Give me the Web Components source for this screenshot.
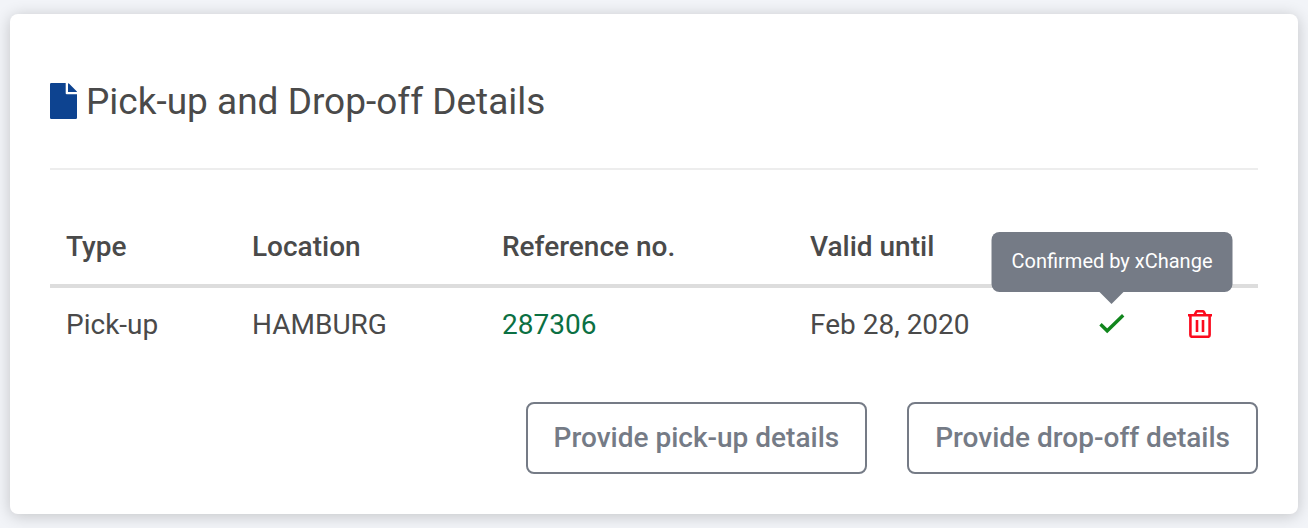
<!DOCTYPE html>
<html lang="en">
<head>
<meta charset="utf-8">
<meta name="viewport" content="width=device-width, initial-scale=1">
<title>Pick-up and Drop-off Details</title>
<style>
body { margin: 0; padding: 14px 10px; background: #f2f4f8; color: #4a4a4a; font-family: Roboto, "Liberation Sans", sans-serif; font-size: 28px; line-height: 42px; }
</style>
</head>
<body>
<x-panel>
  <x-icon slot="icon" name="file"></x-icon>
  <span slot="title">Pick-up and Drop-off Details</span>
  <x-details-table></x-details-table>
  <x-button slot="actions">Provide pick-up details</x-button>
  <x-button slot="actions">Provide drop-off details</x-button>
</x-panel>
<script>
class ShadowElement extends HTMLElement {
  constructor() {
    super();
    this.attachShadow({ mode: 'open' }).innerHTML = this.constructor.markup;
  }
}

customElements.define('x-icon', class extends HTMLElement {
  static shapes = {
    file: '<svg width="27" height="36" viewBox="0 0 27 36" fill="#0d4390"><path d="M1.3 0H15.7V10.2Q15.7 11.3 16.8 11.3H27V34.7Q27 36 25.7 36H1.3Q0 36 0 34.7V1.3Q0 0 1.3 0Z"/><path d="M18 0.2Q18.7 0.3 19.2 0.8L26.4 7.9Q27 8.5 27 9H18Z"/></svg>',
    check: '<svg width="28" height="28" viewBox="0 0 28 28" fill="none" stroke="#11861d" stroke-width="3.4"><path d="M2.5 14.3 9.2 20.8 25.2 5.3"/></svg>',
    trash: '<svg width="28" height="28" viewBox="0 0 28 28" fill="none" stroke="#fb0a1e" stroke-width="2.6"><path d="M2 5.3H26M8.5 5.3 10 2.2Q10.5 1.2 11.7 1.2H16.3Q17.5 1.2 18 2.2L19.5 5.3M4.4 5.3V25Q4.4 26.8 6.2 26.8H21.8Q23.6 26.8 23.6 25V5.3M11 10V22M17 10V22"/></svg>'
  };
  connectedCallback() {
    if (this.shadowRoot) return;
    this.attachShadow({ mode: 'open' }).innerHTML =
      '<style>:host{display:inline-flex}svg{display:block}</style>' + this.constructor.shapes[this.getAttribute('name')];
  }
});

customElements.define('x-panel', class extends ShadowElement {
  static markup = `
    <style>
      :host { display: block; box-sizing: border-box; padding: 40px; background: #fff; border-radius: 8px; box-shadow: 0 2px 16px rgba(0, 0, 0, .2); }
      header { display: flex; align-items: center; gap: 9px; padding: 24px 0 42px; border-bottom: 2px solid #ededed; margin-bottom: 40px; }
      ::slotted([slot=icon]) { padding-bottom: 3px; }
      h2 { margin: 0; font-size: 37px; font-weight: 400; line-height: 48px; }
      footer { display: flex; flex-wrap: wrap; justify-content: flex-end; gap: 40px; margin-top: 40px; }
    </style>
    <header><slot name="icon"></slot><h2><slot name="title"></slot></h2></header>
    <slot></slot>
    <footer><slot name="actions"></slot></footer>`;
});

customElements.define('x-button', class extends ShadowElement {
  static markup = `
    <style>
      :host { display: block; }
      button { display: block; height: 72px; padding: 0 26px; border: 2px solid #757b86; border-radius: 8px; background: #fff; color: #757b86; font: inherit; font-weight: 500; cursor: pointer; }
    </style>
    <button type="button"><slot></slot></button>`;
});

customElements.define('x-tooltip', class extends ShadowElement {
  static markup = `
    <style>
      :host { display: inline-flex; position: relative; vertical-align: middle; }
      [role=tooltip] { position: absolute; bottom: calc(100% + 18px); left: 50%; transform: translateX(-50%); box-sizing: border-box; padding: 14px 20px 16px; border-radius: 8px; background: #757b86; color: #fff; font-size: 20px; line-height: 30px; white-space: nowrap; }
      [role=tooltip]::after { content: ""; position: absolute; top: 100%; left: 50%; margin-left: -12px; border: 12px solid transparent; border-top-color: #757b86; border-bottom: 0; }
    </style>
    <slot></slot><div role="tooltip"><slot name="tip"></slot></div>`;
});

customElements.define('x-details-table', class extends ShadowElement {
  static markup = `
    <style>
      :host { display: block; }
      table { width: 100%; border-collapse: separate; border-spacing: 0; table-layout: fixed; }
      th, td { padding: 16px; text-align: left; white-space: nowrap; }
      th { font-weight: 500; border-bottom: 4px solid #ddd; }
      td { height: 42px; }
      .type { width: 186px; } .location { width: 250px; } .reference { width: 308px; }
      .status { width: 88px; } .remove { width: 102px; }
      .icon { padding: 0 0 2px; text-align: center; line-height: 0; }
      .icon:last-child { text-align: left; padding-left: 30px; }
      a { color: #0b7043; text-decoration: none; }
      button { display: inline-flex; padding: 0; border: 0; background: none; vertical-align: middle; cursor: pointer; }
    </style>
    <table>
      <colgroup><col class="type"><col class="location"><col class="reference"><col><col class="status"><col class="remove"></colgroup>
      <thead><tr><th>Type</th><th>Location</th><th>Reference no.</th><th>Valid until</th><th></th><th></th></tr></thead>
      <tbody><tr>
        <td>Pick-up</td><td>HAMBURG</td><td><a href="#287306">287306</a></td><td>Feb 28, 2020</td>
        <td class="icon"><x-tooltip><x-icon name="check"></x-icon><span slot="tip">Confirmed by xChange</span></x-tooltip></td>
        <td class="icon"><button type="button" aria-label="Delete"><x-icon name="trash"></x-icon></button></td>
      </tr></tbody>
    </table>`;
});
</script>
</body>
</html>
